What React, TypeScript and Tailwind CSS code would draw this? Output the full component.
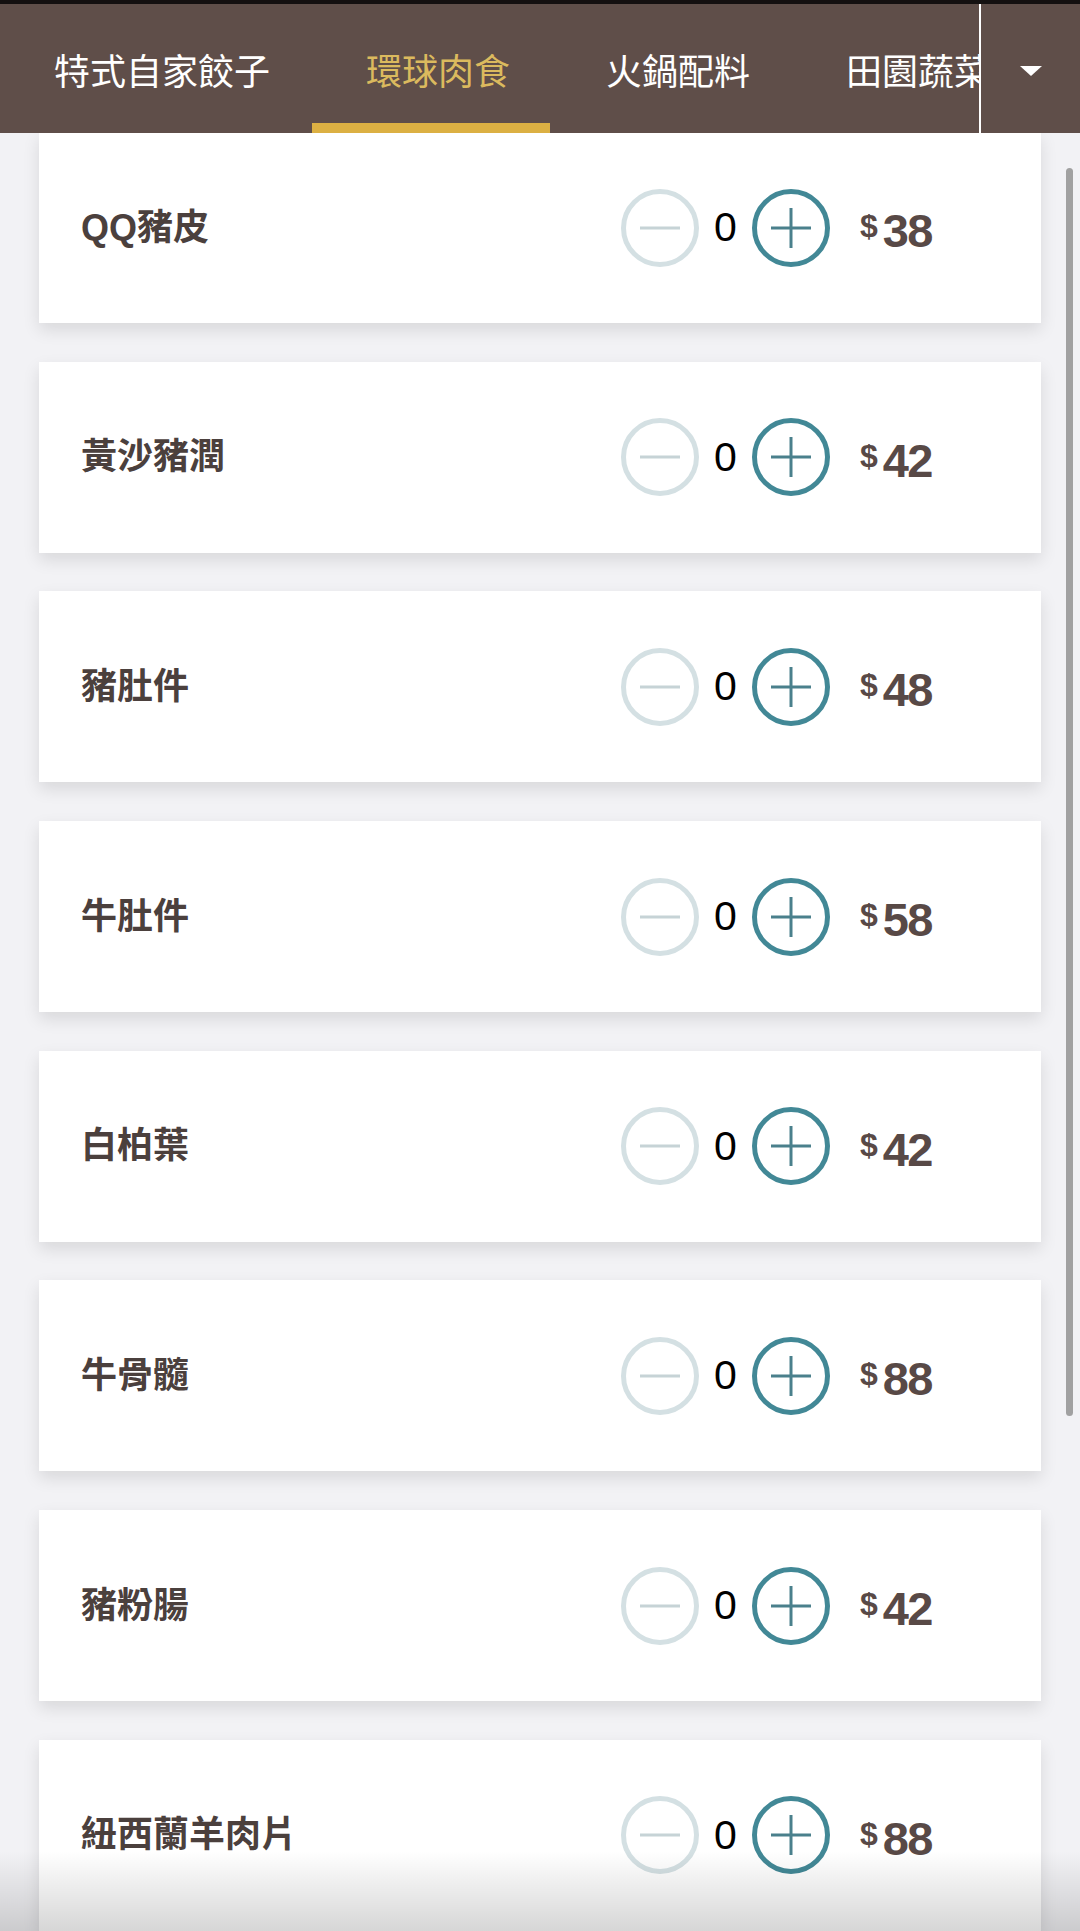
import { useState } from 'react';

type Item = { name: string; price: number };

const tabs = ['特式自家餃子', '環球肉食', '火鍋配料', '田園蔬菜'];

const items: Item[] = [
  { name: 'QQ豬皮', price: 38 },
  { name: '黃沙豬潤', price: 42 },
  { name: '豬肚件', price: 48 },
  { name: '牛肚件', price: 58 },
  { name: '白柏葉', price: 42 },
  { name: '牛骨髓', price: 88 },
  { name: '豬粉腸', price: 42 },
  { name: '紐西蘭羊肉片', price: 88 },
];

const cjk = 'font-["Liberation_Sans","Noto_Sans_CJK_TC",sans-serif]';

function Stepper({ count, onChange }: { count: number; onChange: (n: number) => void }) {
  return (
    <div className="flex items-center">
      <button
        onClick={() => onChange(Math.max(0, count - 1))}
        className="w-[78px] h-[78px] rounded-full border-[5px] border-[#d4e0e3] flex items-center justify-center"
      >
        <svg width="40" height="4" viewBox="0 0 40 4">
          <line x1="0" y1="2" x2="40" y2="2" stroke="#c6d3d6" strokeWidth="3" />
        </svg>
      </button>
      <span className="w-[53px] text-center text-[41px] leading-none text-black font-['Liberation_Sans',sans-serif]">
        {count}
      </span>
      <button
        onClick={() => onChange(count + 1)}
        className="w-[78px] h-[78px] rounded-full border-[5px] border-[#428896] flex items-center justify-center"
      >
        <svg width="40" height="40" viewBox="0 0 40 40">
          <line x1="0" y1="20" x2="40" y2="20" stroke="#4a808c" strokeWidth="3" />
          <line x1="20" y1="0" x2="20" y2="40" stroke="#4a808c" strokeWidth="3" />
        </svg>
      </button>
    </div>
  );
}

function ItemCard({ item }: { item: Item }) {
  const [count, setCount] = useState(0);
  return (
    <div className="h-[191px] bg-white flex items-center pl-[42px] pr-[109px] shadow-[0_7px_16px_rgba(0,0,0,0.11)]">
      <div className={`flex-1 text-[36px] font-bold text-[#4b403d] ${cjk}`}>{item.name}</div>
      <Stepper count={count} onChange={setCount} />
      <div className="ml-[30px] mt-[6px] text-[#584946] font-bold font-['Liberation_Sans',sans-serif] leading-none whitespace-nowrap">
        <span className="text-[32px] align-[10px] mr-[5px]">$</span>
        <span className="text-[47px] tracking-[-1.5px]">{item.price}</span>
      </div>
    </div>
  );
}

export default function App() {
  const [active, setActive] = useState(1);

  return (
    <div className="relative h-[1931px] overflow-hidden bg-[#f2f2f5]">
      <header className="relative z-10 h-[133px] bg-[#5f4e49] border-t-4 border-[#141010] flex">
        <div className="w-[979px] overflow-hidden flex pl-[6px]">
          {tabs.map((t, i) => (
            <button
              key={t}
              onClick={() => setActive(i)}
              className={`relative shrink-0 h-full px-[48px] pt-[8px] flex items-center whitespace-nowrap text-[36px] ${cjk} ${
                i === active ? 'text-[#dbba5e]' : 'text-white'
              }`}
            >
              {t}
              {i === active && (
                <span className="absolute bottom-0 left-[-6px] right-[8px] h-[10px] bg-[#dcb043]" />
              )}
            </button>
          ))}
        </div>
        <div className="w-[2px] bg-white" />
        <div className="flex-1 flex items-center justify-center pt-[4px]">
          <svg width="22" height="10" viewBox="0 0 22 10">
            <polygon points="0,0 22,0 11,10" fill="white" />
          </svg>
        </div>
      </header>

      <main className="-mt-px px-[39px] flex flex-col gap-[38.7px]">
        {items.map((it) => (
          <ItemCard key={it.name} item={it} />
        ))}
      </main>

      <div className="absolute right-[7px] top-[168px] h-[1248px] w-[7px] rounded-full bg-[#a1a1a1]" />
      <div className="pointer-events-none absolute inset-x-0 bottom-0 h-[80px] bg-gradient-to-b from-transparent to-[rgba(0,0,0,0.16)]" />
    </div>
  );
}
